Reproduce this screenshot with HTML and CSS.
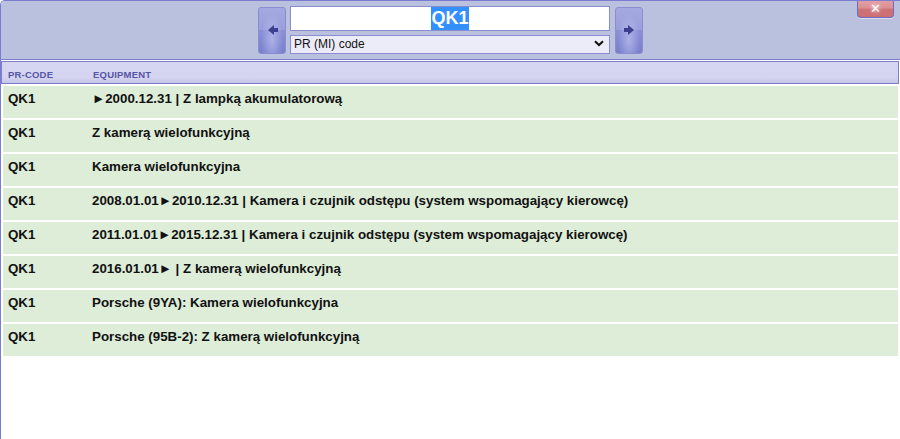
FILE: index.html
```html
<!DOCTYPE html>
<html lang="pl">
<head>
    <meta charset="UTF-8">
    <meta name="viewport" content="width=device-width, initial-scale=1.0">
    <title>PR code lookup</title>
    <link rel="stylesheet" href="styles.css">
</head>
<body>
    <div class="window">
        <div class="toolbar">
            <button class="nav prev" title="Previous"><span class="arrow"></span></button>
            <div class="search">
                <div class="code-input"><span class="selected">QK1</span></div>
                <div class="select-wrap">
                    <select class="mode">
                        <option>PR (MI) code</option>
                    </select>
                    <svg class="chevron" width="10" height="7" viewBox="0 0 10 7"><path d="M1 1.2 L5 5 L9 1.2" fill="none" stroke="#111" stroke-width="2"/></svg>
                </div>
            </div>
            <button class="nav next" title="Next"><span class="arrow"></span></button>
            <button class="close" title="Close">&#x2715;</button>
        </div>

        <div class="results">
            <div class="row head">
                <div class="c-code">PR-CODE</div>
                <div class="c-eq">EQUIPMENT</div>
            </div>
            <div class="row"><div class="c-code">QK1</div><div class="c-eq">►2000.12.31 | Z lampką akumulatorową</div></div>
            <div class="row"><div class="c-code">QK1</div><div class="c-eq">Z kamerą wielofunkcyjną</div></div>
            <div class="row"><div class="c-code">QK1</div><div class="c-eq">Kamera wielofunkcyjna</div></div>
            <div class="row"><div class="c-code">QK1</div><div class="c-eq">2008.01.01►2010.12.31 | Kamera i czujnik odstępu (system wspomagający kierowcę)</div></div>
            <div class="row"><div class="c-code">QK1</div><div class="c-eq">2011.01.01►2015.12.31 | Kamera i czujnik odstępu (system wspomagający kierowcę)</div></div>
            <div class="row"><div class="c-code">QK1</div><div class="c-eq">2016.01.01► | Z kamerą wielofunkcyjną</div></div>
            <div class="row"><div class="c-code">QK1</div><div class="c-eq">Porsche (9YA): Kamera wielofunkcyjna</div></div>
            <div class="row"><div class="c-code">QK1</div><div class="c-eq">Porsche (95B-2): Z kamerą wielofunkcyjną</div></div>
        </div>
    </div>
</body>
</html>
```

FILE: styles.css
```css
html, body { margin: 0; height: 100%; }
body { font-family: "Liberation Sans", Arial, sans-serif; background: #fff; color: #111; }
.window { height: 100%; box-sizing: border-box; border-left: 1px solid #7b7bd4; border-top: 1px solid #7b7bd4; border-top-left-radius: 5px; overflow: hidden; }

/* top bar with code search */
.toolbar { position: relative; height: 58px; background: #b9c1de; border-bottom: 1px solid #7d7dcc; display: flex; align-items: center; justify-content: center; gap: 4px; }
.nav { width: 28px; height: 47px; padding: 0; border: 1px solid #8a8ed0; border-radius: 3px; cursor: pointer; display: flex; align-items: center; justify-content: center;
       background: radial-gradient(ellipse at 50% 70%, rgba(190,195,240,0.7) 0%, rgba(190,195,240,0) 60%), linear-gradient(#a4a9e0 0%, #9a9fdc 48%, #8a8fd6 50%, #7a7fcc 100%); }
.nav.next { margin-left: 1px; }
.nav .arrow { position: relative; width: 0; height: 0; border-top: 5px solid transparent; border-bottom: 5px solid transparent; }
.nav .arrow::after { content: ""; position: absolute; top: -2px; width: 4px; height: 4px; background: #3c408f; }
.prev .arrow { border-right: 6px solid #3c408f; margin-right: 3px; }
.prev .arrow::after { left: 6px; }
.next .arrow { border-left: 6px solid #3c408f; margin-left: 3px; }
.next .arrow::after { right: 6px; }

.search { width: 320px; display: flex; flex-direction: column; gap: 3px; }
.code-input { height: 23px; background: #fff; border: 1px solid #8a8ed0; text-align: center; font-size: 18px; font-weight: bold; line-height: 23px; overflow: hidden; }
.code-input .selected { background: #3390ff; color: #fff; display: inline-block; height: 23px; }
.select-wrap { position: relative; }
.mode { width: 100%; height: 19px; appearance: none; -webkit-appearance: none; border: 1px solid #8a8ed0; border-radius: 0; background: #ececf8; font-family: "Liberation Sans", Arial, sans-serif; font-size: 12px; color: #111; padding: 0 0 0 3px; margin: 0; }
.chevron { position: absolute; right: 6px; top: 6px; pointer-events: none; }

.close { position: absolute; top: -1px; right: 6px; width: 37px; height: 18px; padding: 0; border: 1px solid #6d6dbd; border-top: none; border-radius: 0 0 4px 4px; color: #fff; font-size: 13px; line-height: 16px; cursor: pointer;
         text-shadow: 0 0 4px #fff; background: linear-gradient(#e4a0a4 0%, #dc9094 45%, #cf7278 55%, #cc6e74 100%); box-shadow: 0 1px 0 #dde0f2; }

/* result list */
.results { padding: 1px 1px 0 0; }
.row { display: flex; height: 32px; margin: 0 1px 2px 2px; background: #ddedd8; font-size: 13.33px; font-weight: bold; line-height: 15px; }
.row > div { padding-top: 5px; }
.c-code { width: 84px; padding-left: 5px; flex: none; }
.c-eq { flex: 1; }
.row.head { height: 21px; margin: 0 0 2px 0; border: 1px solid #7d7dcc; background: linear-gradient(#d6d6f2 0%, #d4d4f0 75%, #c4c4e6 100%); font-size: 9.5px; color: #5656a6; letter-spacing: 0.2px; }
.row.head > div { padding-top: 5px; }
.row.head .c-code { padding-left: 6px; width: 85px; }
```
